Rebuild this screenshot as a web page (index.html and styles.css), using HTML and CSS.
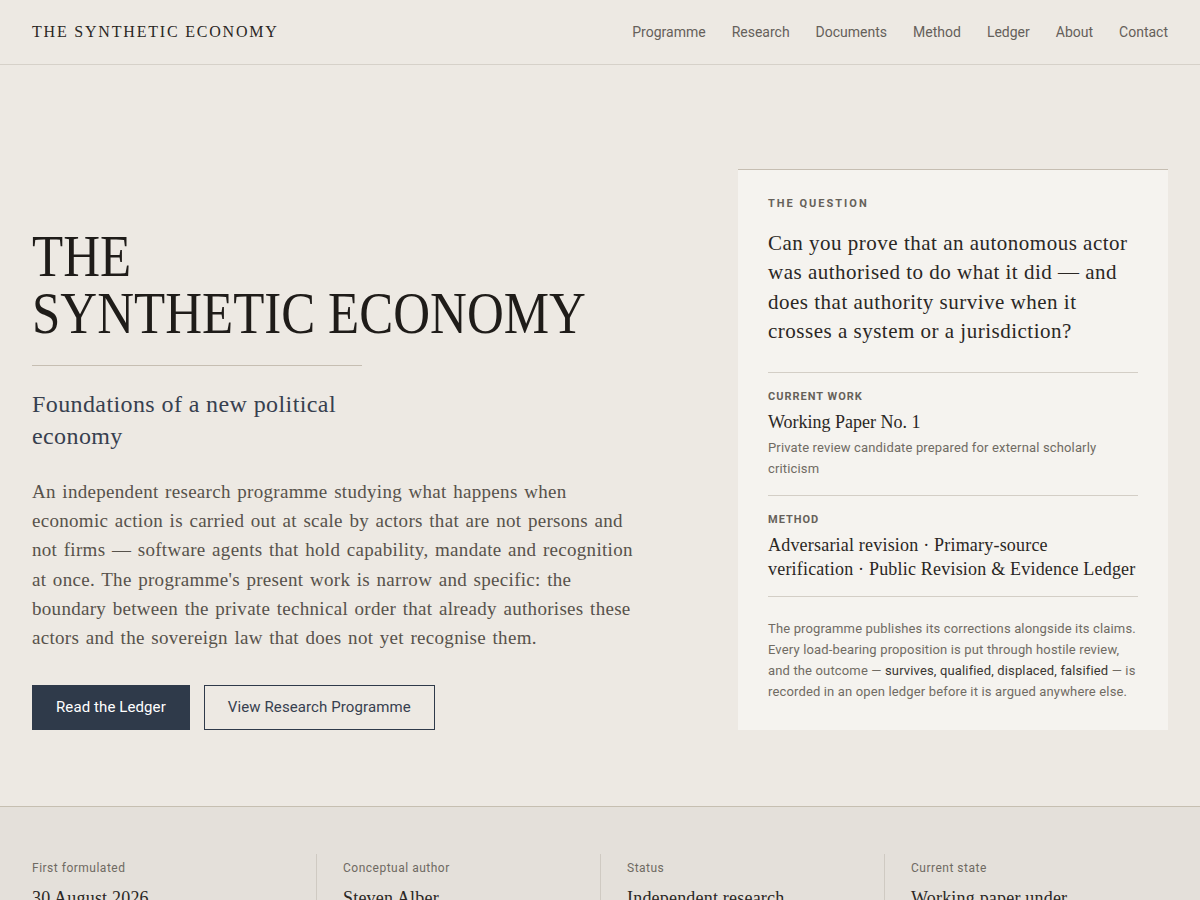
FILE: index.html
```html
<!DOCTYPE HTML>
<html lang="en-gb">
<head>
    <meta charset="utf-8" />
    <meta name="viewport" content="width=device-width, initial-scale=1">
    <title>The Synthetic Economy</title>
    <link rel="stylesheet" href="styles.css">
</head>
<body>
    <header class="site-header">
        <a class="brand" href="#">THE SYNTHETIC ECONOMY</a>
        <nav class="nav">
            <a href="#">Programme</a>
            <a href="#">Research</a>
            <a href="#">Documents</a>
            <a href="#">Method</a>
            <a href="#">Ledger</a>
            <a href="#">About</a>
            <a href="#">Contact</a>
        </nav>
    </header>

    <section class="hero">
        <div class="hero-main">
            <h1 class="hero-title">THE<br>SYNTHETIC ECONOMY</h1>
            <hr class="hero-rule">
            <p class="hero-sub">Foundations of a new political economy</p>
            <p class="hero-text">An independent research programme studying what happens when economic action is carried out at scale by actors that are not persons and not firms — software agents that hold capability, mandate and recognition at once. The programme's present work is narrow and specific: the boundary between the private technical order that already authorises these actors and the sovereign law that does not yet recognise them.</p>
            <div class="actions">
                <a class="btn btn-dark" href="#">Read the Ledger</a>
                <a class="btn btn-outline" href="#">View Research Programme</a>
            </div>
        </div>

        <aside class="card">
            <p class="label label-wide">The Question</p>
            <p class="question">Can you prove that an autonomous actor was authorised to do what it did — and does that authority survive when it crosses a system or a jurisdiction?</p>

            <div class="card-block">
                <p class="label">Current Work</p>
                <p class="card-title">Working Paper No. 1</p>
                <p class="card-note">Private review candidate prepared for external scholarly criticism</p>
            </div>

            <div class="card-block">
                <p class="label">Method</p>
                <p class="card-title card-method">Adversarial revision · Primary-source<br>verification · Public Revision &amp; Evidence Ledger</p>
            </div>

            <div class="card-block card-last">
                <p class="card-note">The programme publishes its corrections alongside its claims. Every load-bearing proposition is put through hostile review, and the outcome — <span class="strong">survives, qualified, displaced, falsified</span> — is recorded in an open ledger before it is argued anywhere else.</p>
            </div>
        </aside>
    </section>

    <section class="facts">
        <div class="fact">
            <p class="fact-label">First formulated</p>
            <p class="fact-value">30 August 2026</p>
        </div>
        <div class="fact">
            <p class="fact-label">Conceptual author</p>
            <p class="fact-value">Steven Alber</p>
        </div>
        <div class="fact">
            <p class="fact-label">Status</p>
            <p class="fact-value">Independent research programme</p>
        </div>
        <div class="fact">
            <p class="fact-label">Current state</p>
            <p class="fact-value">Working paper under private review</p>
        </div>
    </section>
</body>
</html>
```

FILE: styles.css
```css
html {
    margin: 0;
    background: #ede9e3;
    color: #2a2724;
}

body {
    margin: 0;
    font-family: "Liberation Serif", "DejaVu Serif", serif;
}

p {
    margin: 0;
}

a {
    color: inherit;
    text-decoration: none;
}

.site-header {
    display: flex;
    align-items: center;
    justify-content: space-between;
    height: 64px;
    padding: 0 32px;
    border-bottom: 1px solid #d6d1c9;
}

.brand {
    font-size: 16px;
    letter-spacing: 1.8px;
    color: #2a2724;
}

.nav {
    display: flex;
    gap: 26px;
    font-family: Roboto, "Liberation Sans", sans-serif;
    font-size: 14px;
}

    .nav a {
        color: #65605a;
    }

.hero {
    display: grid;
    grid-template-columns: minmax(0, 1fr) 430px;
    gap: 80px;
    align-items: start;
    padding: 104px 32px 76px 32px;
}

.hero-main {
    padding-top: 59px;
}

/* the display face is condensed, so squeeze the serif a little */
.hero-title {
    margin: 0;
    font-weight: normal;
    font-size: 60px;
    line-height: 57px;
    color: #1f1c19;
    transform: scaleX(0.85);
    transform-origin: left;
    white-space: nowrap;
}

.hero-rule {
    width: 330px;
    margin: 23px 0 22px 0;
    border: 0;
    border-top: 1px solid #c6beb2;
}

.hero-sub {
    max-width: 330px;
    font-size: 24px;
    line-height: 32px;
    letter-spacing: 0.4px;
    color: #37404f;
}

.hero-text {
    max-width: 608px;
    margin-top: 25px;
    font-size: 19px;
    line-height: 29.2px;
    letter-spacing: 0.3px;
    word-spacing: 1.5px;
    color: #57524b;
}

.actions {
    display: flex;
    gap: 14px;
    margin-top: 33px;
}

.btn {
    display: inline-block;
    height: 45px;
    box-sizing: border-box;
    padding: 0 23px;
    line-height: 43px;
    font-family: Roboto, "Liberation Sans", sans-serif;
    font-size: 15px;
    letter-spacing: 0.1px;
    border: 1px solid #2f3a4a;
}

.btn-dark {
    background: #2f3a4a;
    color: #ffffff;
}

.btn-outline {
    color: #37404f;
}

.card {
    background: #f5f3ef;
    border-top: 1px solid #c6beb2;
    padding: 27px 30px 28px 30px;
}

.label {
    font-family: Roboto, "Liberation Sans", sans-serif;
    font-size: 11px;
    font-weight: bold;
    letter-spacing: 1px;
    text-transform: uppercase;
    color: #66615a;
}

.label-wide {
    letter-spacing: 2px;
}

.question {
    margin-top: 19px;
    font-size: 21px;
    line-height: 29.4px;
    letter-spacing: 0.5px;
    color: #2a2724;
}

.card-block {
    margin-top: 25px;
    padding-top: 17px;
    border-top: 1px solid #d3cec6;
}

    .card-block + .card-block {
        margin-top: 16px;
    }

    .card-block + .card-last {
        margin-top: 15px;
        padding-top: 21px;
    }

.card-title {
    margin-top: 7px;
    font-size: 18px;
    line-height: 24px;
    color: #2a2724;
}

.card-method {
    letter-spacing: 0.2px;
}

.card-note {
    margin-top: 3px;
    font-family: Roboto, "Liberation Sans", sans-serif;
    font-size: 13px;
    line-height: 21px;
    letter-spacing: 0.15px;
    color: #706b63;
}

.card-last .card-note {
    margin-top: 0;
}

.strong {
    color: #3a3631;
}

.facts {
    display: grid;
    grid-template-columns: repeat(4, 1fr);
    padding: 47px 32px 40px 32px;
    background: #e4e0da;
    border-top: 1px solid #c6bfb1;
}

.fact {
    padding: 7px 26px 0 26px;
    border-left: 1px solid #cfcac2;
}

    .fact:first-child {
        padding-left: 0;
        border-left: 0;
    }

.fact-label {
    font-family: Roboto, "Liberation Sans", sans-serif;
    font-size: 12px;
    letter-spacing: 0.5px;
    color: #6f6a62;
}

.fact-value {
    max-width: 200px;
    margin-top: 10px;
    font-size: 18px;
    line-height: 26px;
    letter-spacing: 0.2px;
    color: #2a2724;
}
```
